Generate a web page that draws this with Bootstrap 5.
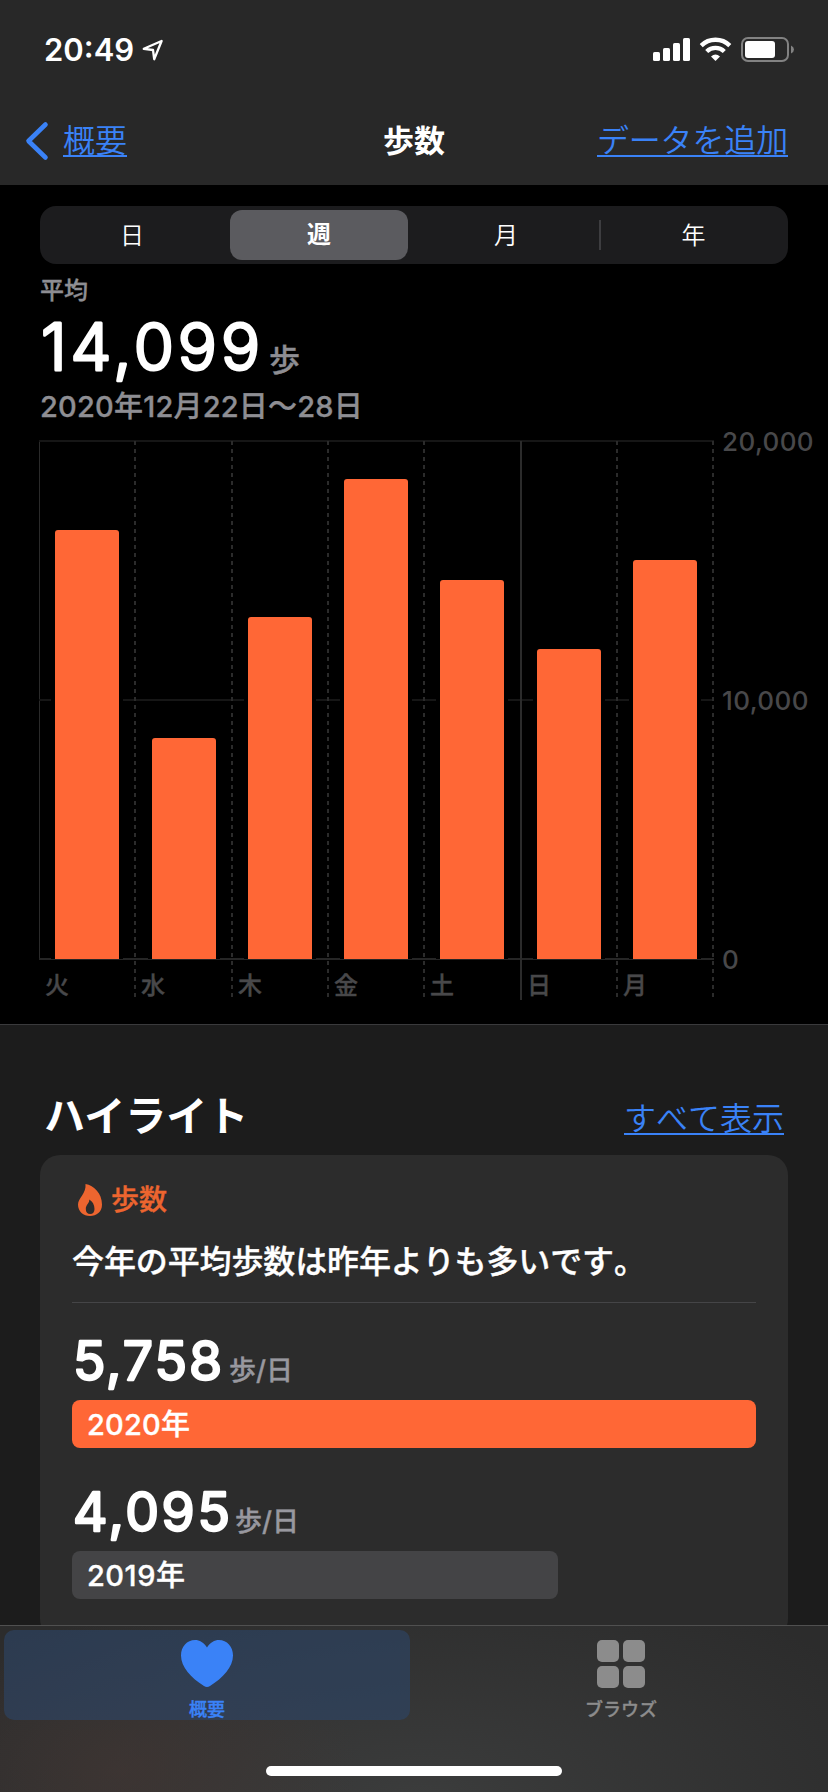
<!DOCTYPE html>
<html lang="ja" data-bs-theme="dark">
<head>
<meta charset="utf-8">
<meta name="viewport" content="width=device-width, initial-scale=1">
<title>歩数</title>
<link href="https://cdn.jsdelivr.net/npm/bootstrap@5.3.0/dist/css/bootstrap.min.css" rel="stylesheet">
<style>
  :root { --blue: #3a82f7; --orange: #ff6736; --gray: #8e8e93; }
  body { font-family: Inter, "Noto Sans CJK JP", sans-serif; background: #1c1c1c; color: #fff; height: 1792px; overflow: hidden; white-space: nowrap; }
  svg { display: block; flex: none; overflow: visible; }
  .semi { -webkit-text-stroke: .35px currentColor; }
  .topbar { height: 185px; background: #282828; }
  .status { height: 100px; padding: 0 33px 0 44px; }
  .clock { font-size: 31px; font-weight: 600; line-height: 100px; }
  .titlebar { height: 85px; line-height: 82px; font-size: 32px; }
  .titlebar .col { height: 81px; }
  .ios-link { color: var(--blue); font-size: 32px; font-weight: 350; text-decoration: none; line-height: 32px; font-kerning: none; }
  .ios-link span { display: inline-block; border-bottom: 2px solid var(--blue); height: 32px; line-height: 31px; }
  .page-title { font-weight: 700; font-size: 31px; }
  .chart-pane { height: 840px; background: #000; border-bottom: 1px solid #3a3a3c; padding-top: 21px; }
  .segments { margin: 0 40px; height: 58px; border-radius: 16px; background: #1c1c1e; display: grid; grid-template-columns: 184px 189px 186px 189px; font-size: 24px; line-height: 59px; text-align: center; }
  .segments > div:not(.chosen) { font-weight: 350; }
  .segments > .chosen { margin: 4px 5px 4px 6px; height: 50px; border-radius: 12px; background: #5b5b5f; font-weight: 700; line-height: 50px; }
  .last-seg { background: linear-gradient(#3d3d40, #3d3d40) 0 14px / 2px 30px no-repeat; }
  .avg { margin: 0 41px; color: var(--gray); }
  .avg-label { height: 50px; line-height: 54px; font-size: 24px; font-weight: 500; margin-left: -1px; }
  .avg-value { height: 70px; }
  .avg-value .unit { font-size: 31px; line-height: 91px; }
  .avg-date { height: 42px; font-size: 29px; letter-spacing: .2px; line-height: 46px; font-weight: 500; margin-left: -1px; }
  .unit { font-weight: 500; }
  .plot { margin-left: 39px; height: 560px; margin-top: 14px; }
  .days { display: grid; grid-template-columns: 96px 97px 96px 96px 97px 96px 97px; width: 675px; height: 560px;
    background:
      linear-gradient(#161616,#161616) 0 0 / 675px 2px no-repeat,
      linear-gradient(#161616,#161616) 0 259px / 675px 2px no-repeat,
      linear-gradient(#262626,#262626) 0 518px / 675px 2px no-repeat,
      linear-gradient(#2a2a2a,#2a2a2a) 0 0 / 1px 519px no-repeat; }
  .day { position: relative; }
  .day::after { content: ""; position: absolute; right: -1px; top: 1px; width: 2px; height: 556px; background: repeating-linear-gradient(#2b2b2b 0 4px, transparent 4px 8px); }
  .day.solid::after { background: #2b2b2b; height: 559px; }
  .day:last-child::after { right: 0; }
  .col-area { height: 519px; padding-left: 12.4px; display: flex; align-items: flex-end; }
  .wide-left { padding-left: 13.4px; }
  .steps { background: #000; width: 71.2px; padding: 0 4px; }
  .steps div { background: var(--orange); border-radius: 3px 3px 0 0; }
  .day-name { font-size: 24px; line-height: 53px; font-weight: 500; color: #48484a; padding-left: 6px; height: 41px; }
  .scale { width: 106px; margin-left: 8px; color: #48484a; font-size: 26px; letter-spacing: .4px; font-weight: 450; line-height: 30px; height: 560px; }
  .scale div { height: 259px; transform: translateY(-13px); }
  .hl-head { height: 130px; padding: 0 44px; }
  .hl-title { font-size: 41px; font-weight: 700; line-height: 60px; margin-top: 61px; }
  .hl-more { margin-top: 78px; }
  .panel { margin: 0 40px; height: 484px; border-radius: 20px; background: #2c2c2c; padding: 28px 32px 0; }
  .panel-label { height: 34px; gap: 9px; color: #ed652f; font-size: 28px; font-weight: 500; padding-left: 6px; line-height: 34px; }
  .panel-text { height: 86px; line-height: 90px; font-size: 32px; letter-spacing: -.12px; font-weight: 500; border-bottom: 1px solid #454547; font-kerning: none; }
  .metric { height: 97px; padding-top: 26px; }
  .metric + .year + .metric { height: 103px; padding-top: 32px; }
  .metric .unit { font-size: 27px; color: #98989f; line-height: 40px; margin-top: 22px; }
  .year { height: 48px; border-radius: 8px; padding-left: 15px; font-size: 29px; letter-spacing: .2px; line-height: 50px; font-weight: 500; }
  .year-now { background: var(--orange); }
  .year-past { background: #444446; letter-spacing: .5px; }
  .tabs { height: 167px; background: radial-gradient(240px 150px at 120px 145px, rgba(70,54,50,.5), transparent), radial-gradient(520px 230px at 420px 170px, #3b3c3c, rgba(59,60,60,0)), #2c2c2c; border-top: 1px solid #505050; padding-top: 4px; }
  .tab { height: 90px; border-radius: 10px; font-size: 18px; font-weight: 500; color: #8c8c8c; line-height: 26px; padding-top: 10px; font-kerning: none; }
  .tab-on { background: rgba(45,70,105,.6); color: var(--blue); }
  .tab > div { margin-top: 10px; }
  .home { width: 296px; height: 10px; border-radius: 5px; background: #fff; margin: 46px auto 0; }
</style>
</head>
<body>
<header class="topbar">
  <div class="status d-flex align-items-center">
    <div class="clock">20:49</div>
    <svg style="margin-left:8px" width="22" height="22" viewBox="0 0 22 22" fill="none" stroke="#fff" stroke-width="2.3" stroke-linejoin="round"><path d="M1.8 9.8 19.6 2 12.2 20.2 11 11Z"/></svg>
    <svg class="ms-auto" width="142" height="26" viewBox="0 0 142 26">
      <g fill="#fff"><rect x="0" y="15" width="7" height="9" rx="1.6"/><rect x="10" y="11" width="7" height="13" rx="1.6"/><rect x="20" y="6" width="7" height="18" rx="1.6"/><rect x="30" y="1" width="7" height="23" rx="1.6"/></g>
      <g fill="none" stroke="#fff" stroke-width="4.3"><path d="M48.2 8.6A20.4 20.4 0 0 1 76.8 8.6"/><path d="M53.7 14.5A12.6 12.6 0 0 1 71.3 14.5"/></g>
      <path d="M58 19.4Q62.500 15.600 67 19.400L62.500 24Z" fill="#fff"/>
      <rect x="89" y="1" width="46" height="23" rx="6" fill="none" stroke="#828282" stroke-width="2"/>
      <rect x="92" y="4" width="30" height="17" rx="3" fill="#fff"/>
      <path d="M138 8.500Q141 10 141 12.500T138 16.500Z" fill="#828282"/>
    </svg>
  </div>
  <nav class="titlebar row gx-0">
    <div class="col d-flex align-items-center">
      <svg style="margin-left:26px" width="22" height="38" viewBox="0 0 22 38" fill="none" stroke="#3a82f7" stroke-width="4.600" stroke-linecap="round" stroke-linejoin="round"><path d="M19.500 2.500 2.500 19 19.500 35.500"/></svg>
      <a class="ios-link" href="#" style="margin-left:15px"><span>概要</span></a>
    </div>
    <div class="col-auto page-title">歩数</div>
    <div class="col d-flex align-items-center justify-content-end"><a class="ios-link" href="#" style="margin-right:40px"><span style="letter-spacing:-.15px">データを追加</span></a></div>
  </nav>
</header>

<main>
  <section class="chart-pane">
    <div class="segments">
      <div>日</div><div class="chosen">週</div><div>月</div><div class="last-seg">年</div>
    </div>
    <div class="avg">
      <div class="avg-label semi">平均</div>
      <div class="avg-value d-flex">
        <svg width="228" height="70"><text x="0" y="56" font-size="65" font-weight="300" fill="#fff" stroke="#fff" stroke-width="3" stroke-linejoin="round" textLength="219" lengthAdjust="spacing">14,099</text></svg>
        <div class="unit semi">歩</div>
      </div>
      <div class="avg-date semi">2020年12月22日〜28日</div>
    </div>
    <div class="plot d-flex">
      <div class="days">
        <div class="day"><div class="col-area"><div class="steps"><div style="height:429px"></div></div></div><div class="day-name semi">火</div></div>
        <div class="day"><div class="col-area wide-left"><div class="steps"><div style="height:221px"></div></div></div><div class="day-name semi">水</div></div>
        <div class="day"><div class="col-area"><div class="steps"><div style="height:342px"></div></div></div><div class="day-name semi">木</div></div>
        <div class="day"><div class="col-area"><div class="steps"><div style="height:480px"></div></div></div><div class="day-name semi">金</div></div>
        <div class="day solid"><div class="col-area"><div class="steps"><div style="height:379px"></div></div></div><div class="day-name semi">土</div></div>
        <div class="day"><div class="col-area"><div class="steps"><div style="height:310px"></div></div></div><div class="day-name semi">日</div></div>
        <div class="day"><div class="col-area"><div class="steps"><div style="height:399px"></div></div></div><div class="day-name semi">月</div></div>
      </div>
      <div class="scale"><div>20,000</div><div>10,000</div><div>0</div></div>
    </div>
  </section>

  <section>
    <div class="hl-head d-flex justify-content-between">
      <h2 class="hl-title mb-0">ハイライト</h2>
      <div class="hl-more"><a class="ios-link" href="#"><span>すべて表示</span></a></div>
    </div>
    <div class="panel">
      <div class="panel-label d-flex align-items-center">
        <svg width="24" height="32" viewBox="0 0 24 32" fill="#ed652f"><path fill-rule="evenodd" d="M7.500 0C16 1.500 24 9.500 24 20.500 24 28 18.500 32 12 32S0 27.500 0 20.500C0 14 8.500 9.500 7.500 0ZM11.300 15.500C11.600 19.500 7.800 20.500 7.800 25 7.800 28.200 9.500 30 12.200 30S16.500 28 16.500 25C16.500 20.500 14.500 17.500 11.300 15.500Z"/></svg>
        <span class="semi">歩数</span>
      </div>
      <div class="panel-text semi">今年の平均歩数は昨年よりも多いです。</div>
      <div class="metric d-flex">
        <svg width="157" height="62"><text x="1" y="50.500" font-size="53.500" font-weight="400" fill="#fff" stroke="#fff" stroke-width="2.400" stroke-linejoin="round" textLength="149" lengthAdjust="spacing">5,758</text></svg>
        <div class="unit semi">歩/日</div>
      </div>
      <div class="year year-now semi" style="width:100%">2020年</div>
      <div class="metric d-flex">
        <svg width="163" height="62"><text x="1" y="50.500" font-size="53.500" font-weight="400" fill="#fff" stroke="#fff" stroke-width="2.400" stroke-linejoin="round" textLength="157" lengthAdjust="spacing">4,095</text></svg>
        <div class="unit semi">歩/日</div>
      </div>
      <div class="year year-past semi" style="width:71.1%">2019年</div>
    </div>
  </section>
</main>

<footer class="tabs fixed-bottom">
  <div class="row gx-0">
    <div class="col-6 px-1"><div class="tab tab-on d-flex flex-column align-items-center">
      <svg width="52" height="47" viewBox="0 0 52 47" fill="#3a82f7"><path d="M26 7.500C29 2.500 33.500 0 38 0 46 0 52 6.500 52 15.500 52 27 42 38 29 46Q26 47.800 23 46C10 38 0 27 0 15.500 0 6.500 6 0 14 0 18.500 0 23 2.500 26 7.500Z"/></svg>
      <div class="semi">概要</div>
    </div></div>
    <div class="col-6 px-1"><div class="tab d-flex flex-column align-items-center">
      <svg width="48" height="48" fill="#8c8c8c"><rect width="22" height="22" rx="5"/><rect x="26" width="22" height="22" rx="5"/><rect y="26" width="22" height="22" rx="5"/><rect x="26" y="26" width="22" height="22" rx="5"/></svg>
      <div class="semi" style="margin-top:9px">ブラウズ</div>
    </div></div>
  </div>
  <div class="home"></div>
</footer>
<script src="https://cdn.jsdelivr.net/npm/bootstrap@5.3.0/dist/js/bootstrap.bundle.min.js"></script>
</body>
</html>
